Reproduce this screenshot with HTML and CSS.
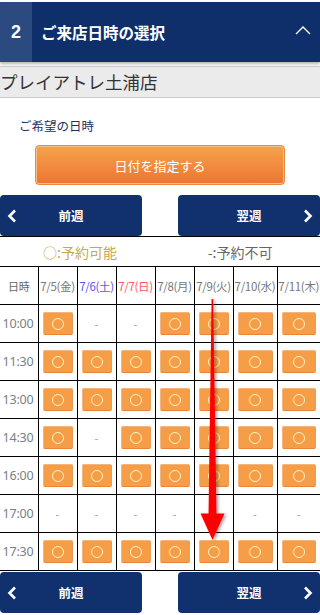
FILE: index.html
```html
<!DOCTYPE html>
<html lang="ja">
<head>
<meta charset="utf-8">
<title>ご来店日時の選択</title>
<link rel="stylesheet" href="styles.css">
</head>
<body>
<div class="page">
  <header class="step-head">
    <div class="step-num">2</div>
    <h2 class="step-title">ご来店日時の選択</h2>
    <svg class="step-toggle" width="16" height="10" viewBox="0 0 16 10"><path d="M1 9 L8 2 L15 9" fill="none" stroke="#fff" stroke-width="1.4"/></svg>
  </header>
  <div class="store">プレイアトレ土浦店</div>
  <p class="label">ご希望の日時</p>
  <div class="date-wrap"><button class="date-btn">日付を指定する</button></div>
  <div class="week-nav">
    <button class="week-btn prev"><svg class="chev" width="10" height="14" viewBox="0 0 10 14"><path d="M8 1.5 L2.5 7 L8 12.5" fill="none" stroke="#fff" stroke-width="2.6"/></svg><span>前週</span></button>
    <button class="week-btn next"><span>翌週</span><svg class="chev" width="10" height="14" viewBox="0 0 10 14"><path d="M2 1.5 L7.5 7 L2 12.5" fill="none" stroke="#fff" stroke-width="2.6"/></svg></button>
  </div>
  <table class="cal">
    <colgroup>
      <col class="c-time"><col class="c-day"><col class="c-day"><col class="c-day"><col class="c-day"><col class="c-day"><col class="c-wide"><col class="c-wide2">
    </colgroup>
    <tr class="legend-row"><td colspan="8"><div class="legend"><span class="ok">○:予約可能</span><span class="ng">-:予約不可</span></div></td></tr>
    <tr class="head-row">
      <th class="time">日時</th>
      <th>7/5(金)</th>
      <th class="sat">7/6(土)</th>
      <th class="sun">7/7(日)</th>
      <th>7/8(月)</th>
      <th>7/9(火)</th>
      <th>7/10(水)</th>
      <th>7/11(木)</th>
    </tr>
    <tr><td class="time">10:00</td><td><span class="slot"><i></i></span></td><td class="no">-</td><td class="no">-</td><td><span class="slot"><i></i></span></td><td><span class="slot"><i></i></span></td><td><span class="slot"><i></i></span></td><td><span class="slot"><i></i></span></td></tr>
    <tr><td class="time">11:30</td><td><span class="slot"><i></i></span></td><td><span class="slot"><i></i></span></td><td><span class="slot"><i></i></span></td><td><span class="slot"><i></i></span></td><td><span class="slot"><i></i></span></td><td><span class="slot"><i></i></span></td><td><span class="slot"><i></i></span></td></tr>
    <tr><td class="time">13:00</td><td><span class="slot"><i></i></span></td><td><span class="slot"><i></i></span></td><td><span class="slot"><i></i></span></td><td><span class="slot"><i></i></span></td><td><span class="slot"><i></i></span></td><td><span class="slot"><i></i></span></td><td><span class="slot"><i></i></span></td></tr>
    <tr><td class="time">14:30</td><td><span class="slot"><i></i></span></td><td class="no">-</td><td><span class="slot"><i></i></span></td><td><span class="slot"><i></i></span></td><td><span class="slot"><i></i></span></td><td><span class="slot"><i></i></span></td><td><span class="slot"><i></i></span></td></tr>
    <tr><td class="time">16:00</td><td><span class="slot"><i></i></span></td><td><span class="slot"><i></i></span></td><td><span class="slot"><i></i></span></td><td><span class="slot"><i></i></span></td><td><span class="slot"><i></i></span></td><td><span class="slot"><i></i></span></td><td><span class="slot"><i></i></span></td></tr>
    <tr><td class="time">17:00</td><td class="no">-</td><td class="no">-</td><td class="no">-</td><td class="no">-</td><td class="no">-</td><td class="no">-</td><td class="no">-</td></tr>
    <tr><td class="time">17:30</td><td><span class="slot"><i></i></span></td><td><span class="slot"><i></i></span></td><td><span class="slot"><i></i></span></td><td><span class="slot"><i></i></span></td><td><span class="slot"><i></i></span></td><td><span class="slot"><i></i></span></td><td><span class="slot"><i></i></span></td></tr>
  </table>
  <div class="week-nav bottom">
    <button class="week-btn prev"><svg class="chev" width="10" height="14" viewBox="0 0 10 14"><path d="M8 1.5 L2.5 7 L8 12.5" fill="none" stroke="#fff" stroke-width="2.6"/></svg><span>前週</span></button>
    <button class="week-btn next"><span>翌週</span><svg class="chev" width="10" height="14" viewBox="0 0 10 14"><path d="M2 1.5 L7.5 7 L2 12.5" fill="none" stroke="#fff" stroke-width="2.6"/></svg></button>
  </div>
  <svg class="arrow" width="320" height="615" viewBox="0 0 320 615">
    <defs>
      <filter id="sh" x="-50%" y="-10%" width="200%" height="120%">
        <feDropShadow dx="2" dy="1" stdDeviation="1.5" flood-color="#000" flood-opacity="0.35"/>
      </filter>
    </defs>
    <g filter="url(#sh)" fill="#ff0000">
      <polygon points="211.6,297 213.2,297 216.5,514 208.5,514"/>
      <polygon points="200.5,511.5 224.5,511.5 212.5,538"/>
    </g>
  </svg>
</div>
</body>
</html>
```
FILE: styles.css
```css
* { box-sizing: border-box; }
html, body { margin: 0; padding: 0; background: #fff; }
body {
  font-family: "Noto Sans CJK JP", "Noto Sans", sans-serif;
  width: 320px;
  overflow: hidden;
}
.page { position: relative; width: 320px; height: 615px; }

.step-head {
  margin-top: 2px;
  height: 60px;
  display: flex;
  align-items: center;
  background: #0f2f6b;
  box-shadow: 0 2px 3px rgba(0, 0, 0, 0.3);
  position: relative;
  z-index: 1;
}
.step-num {
  width: 32px;
  height: 60px;
  background: #2b4a80;
  color: #fff;
  font-family: "Liberation Sans", sans-serif;
  font-weight: bold;
  font-size: 18px;
  display: flex;
  align-items: center;
  justify-content: center;
}
.step-title {
  margin: 0 0 0 9px;
  flex: 1;
  color: #fff;
  font-size: 15.5px;
  font-weight: bold;
  line-height: 20px;
  letter-spacing: 0;
}
.step-toggle { margin-right: 9px; margin-top: -4px; }

.store {
  margin-top: 4px;
  height: 32px;
  border-top: 1px solid #c9ccd3;
  border-bottom: 1px solid #c9ccd3;
  background: #ebebeb;
  color: #333;
  font-size: 17.5px;
  line-height: 29px;
  white-space: nowrap;
}
.label {
  margin: 18px 0 0 19px;
  font-size: 12.5px;
  line-height: 20px;
  color: #1c3263;
}
.date-wrap { padding: 9px 35px 0; }
.date-btn {
  display: block;
  width: 250px;
  height: 40px;
  border: 1px solid #e98a3c;
  border-radius: 4px;
  background: linear-gradient(#f6a34b, #ec7532);
  box-shadow: inset 0 0 0 1px #f7c08c;
  color: #fff;
  font-family: inherit;
  font-size: 13px;
  padding: 0;
}

.week-nav {
  margin-top: 10px;
  display: flex;
  justify-content: space-between;
}
.week-nav.bottom { margin-top: 1px; }
.week-btn {
  width: 142px;
  height: 41px;
  border: none;
  border-radius: 4px;
  background: #10306e;
  color: #fff;
  font-family: inherit;
  font-weight: bold;
  font-size: 12.5px;
  display: flex;
  align-items: center;
  padding: 0 7px;
}
.week-btn span { flex: 1; text-align: center; }
.week-btn.prev .chev { margin-right: -10px; }
.week-btn.next .chev { margin-left: -10px; }

.cal {
  width: 320px;
  border-collapse: collapse;
  table-layout: fixed;
}
.c-time { width: 38px; }
.c-day { width: 39px; }
.c-wide { width: 44px; }
.c-wide2 { width: 43px; }
.cal td, .cal th {
  border: 1px solid #000;
  padding: 0;
  text-align: center;
  vertical-align: middle;
  height: 38px;
  font-weight: normal;
}
.cal tr > :first-child { border-left: none; }
.cal tr > :last-child { border-right: none; }
.cal .legend-row td { height: 30px; }
.legend { display: flex; font-size: 14px; line-height: 20px; }
.legend span { flex: 1; text-align: center; }
.legend .ok { color: #c6a84e; }
.legend .ng { color: #666; }

.head-row th {
  font-size: 11.5px;
  color: #777;
  white-space: nowrap;
  letter-spacing: -0.3px;
}
.head-row th.time { font-size: 11px; color: #666; }
.head-row th.sat { color: #6653f2; }
.head-row th.sun { color: #ff5468; }
td.time {
  font-family: "Noto Sans", sans-serif;
  font-size: 12.5px;
  color: #7a8088;
  text-align: right;
  padding-right: 4px;
  letter-spacing: -0.2px;
}
td.no { color: #999; font-size: 11px; }
.slot {
  display: flex;
  align-items: center;
  justify-content: center;
  height: 23px;
  margin: 0 4px;
  background: #f59e47;
  border: 1px solid #f3b57c;
  border-bottom-color: #e9853b;
  border-right-color: #ed9a55;
  border-radius: 2px;
}
.slot i {
  display: block;
  width: 12px;
  height: 12px;
  border: 1.4px solid #fff5c8;
  border-radius: 50%;
}

.arrow {
  position: absolute;
  left: 0;
  top: 0;
  pointer-events: none;
}
```
